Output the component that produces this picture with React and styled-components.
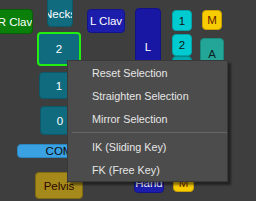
import React from "react";
import styled, { createGlobalStyle } from "styled-components";

const Global = createGlobalStyle`
  html, body { margin: 0; padding: 0; background: #3e3e3e; }
  body { width: 256px; height: 201px; overflow: hidden; }
`;

const Canvas = styled.div`
  position: relative;
  width: 256px;
  height: 201px;
  overflow: hidden;
  background: #3e3e3e;
  font-family: "Liberation Sans", Arial, sans-serif;
`;

const Node = styled.div`
  position: absolute;
  box-sizing: border-box;
  display: flex;
  align-items: center;
  justify-content: center;
  white-space: nowrap;
  overflow: hidden;
  font-size: 11.5px;
  border-radius: 4px;
  color: ${(p) => p.$fg || "#ffffff"};
  background: ${(p) => p.$bg};
  border: ${(p) => (p.$selected ? "2px solid #22ee11" : `1px solid ${p.$bd}`)};
  padding-top: ${(p) => p.$pt || 0}px;
`;

const Menu = styled.div`
  position: absolute;
  left: 67px;
  top: 60px;
  width: 161px;
  box-sizing: border-box;
  background: #4c4c4c;
  border: 1px solid #393939;
  box-shadow: 3px 3px 2px rgba(0, 0, 0, 0.45);
  display: flex;
  flex-direction: column;
  font-family: "Liberation Sans", Arial, sans-serif;
  font-size: 10.8px;
  color: #e6e6e6;
`;

const Item = styled.div`
  height: 23px;
  display: flex;
  align-items: center;
  padding-left: 24px;
  white-space: nowrap;
`;

const Separator = styled.div`
  height: 1px;
  margin: 2px 0 2px 4px;
  background: #666666;
`;

const nodes = [
  { t: "R Clav", x: -3, y: 9, w: 36, h: 25, bg: "#0a7f0a", bd: "#066006" },
  { t: "Necks", x: 47, y: -4, w: 26, h: 31, bg: "#106b7f", bd: "#0c5868", pt: 4 },
  { t: "L Clav", x: 87, y: 9, w: 38, h: 24, bg: "#1d1dab", bd: "#14148a" },
  { t: "L", x: 135, y: 8, w: 26, h: 78, bg: "#1717a3", bd: "#121286" },
  { t: "1", x: 172, y: 10, w: 20, h: 21, bg: "#00cbd0", bd: "#00a3a8", fg: "#101010" },
  { t: "", x: 172, y: 56, w: 20, h: 20, bg: "#00a9ad", bd: "#008a8e", fg: "#101010" },
  { t: "2", x: 172, y: 34, w: 20, h: 22, bg: "#00cbd0", bd: "#00a3a8", fg: "#101010" },
  { t: "M", x: 202, y: 10, w: 20, h: 20, bg: "#f7cc00", bd: "#c9a200", fg: "#6a1a00" },
  { t: "A", x: 200, y: 38, w: 24, h: 28, bg: "#23a697", bd: "#1a887b", fg: "#0f1f1f", pt: 4 },
  { t: "2", x: 37, y: 32, w: 44, h: 34, bg: "#106b7f", selected: true },
  { t: "1", x: 39, y: 72, w: 40, h: 27, bg: "#106b7f", bd: "#0c5868" },
  { t: "0", x: 40, y: 106, w: 40, h: 29, bg: "#106b7f", bd: "#0c5868" },
  { t: "COM", x: 17, y: 144, w: 84, h: 14, bg: "#3aa2e3", bd: "#2c86c0", fg: "#0a0a0a" },
  { t: "Pelvis", x: 35, y: 172, w: 48, h: 27, bg: "#a58a1b", bd: "#7f6a10", fg: "#2a0800" },
  { t: "Hand", x: 134, y: 171, w: 30, h: 22, bg: "#1d1dab", bd: "#14148a", pt: 2 },
  { t: "M", x: 173, y: 171, w: 21, h: 21, bg: "#f7cc00", bd: "#c9a200", fg: "#6a1a00", pt: 2 },
];

export default function App() {
  return (
    <>
      <Global />
      <Canvas>
        {nodes.map((n, i) => (
          <Node
            key={i}
            $bg={n.bg}
            $bd={n.bd}
            $fg={n.fg}
            $pt={n.pt}
            $selected={n.selected}
            style={{ left: n.x, top: n.y, width: n.w, height: n.h }}
          >
            {n.t}
          </Node>
        ))}
        <Menu>
          <Item>Reset Selection</Item>
          <Item>Straighten Selection</Item>
          <Item>Mirror Selection</Item>
          <Separator />
          <Item>IK (Sliding Key)</Item>
          <Item>FK (Free Key)</Item>
        </Menu>
      </Canvas>
    </>
  );
}
